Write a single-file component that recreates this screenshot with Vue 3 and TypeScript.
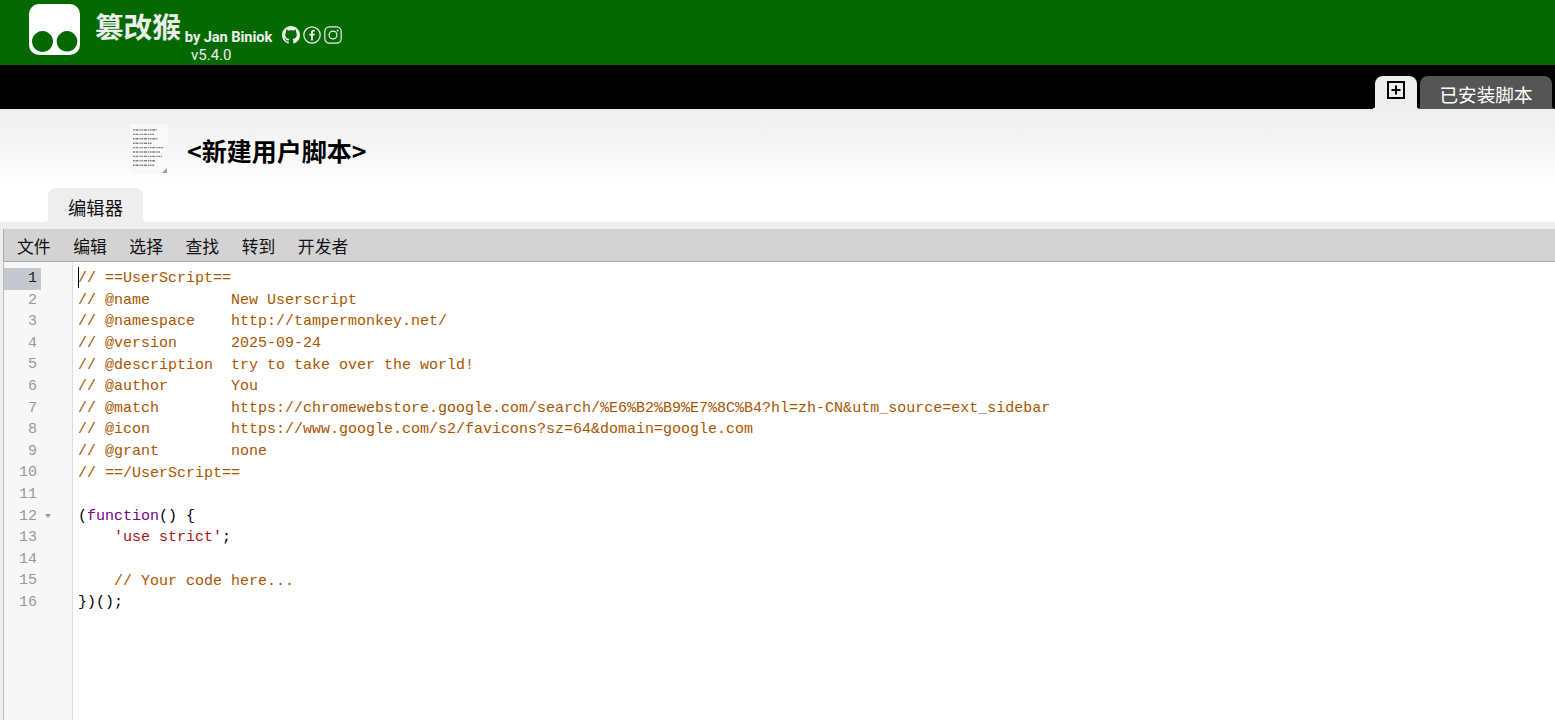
<script setup lang="ts">
type Token = { t: string; c?: string }
const comment = (t: string): Token[] => [{ t, c: 'cm' }]
const lines: Token[][] = [
  comment('// ==UserScript=='),
  comment('// @name         New Userscript'),
  comment('// @namespace    http://tampermonkey.net/'),
  comment('// @version      2025-09-24'),
  comment('// @description  try to take over the world!'),
  comment('// @author       You'),
  comment('// @match        https://chromewebstore.google.com/search/%E6%B2%B9%E7%8C%B4?hl=zh-CN&utm_source=ext_sidebar'),
  comment('// @icon         https://www.google.com/s2/favicons?sz=64&domain=google.com'),
  comment('// @grant        none'),
  comment('// ==/UserScript=='),
  [],
  [{ t: '(' }, { t: 'function', c: 'kw' }, { t: '() {' }],
  [{ t: '    ' }, { t: "'use strict'", c: 'str' }, { t: ';' }],
  [],
  [{ t: '    ' }, { t: '// Your code here...', c: 'cm' }],
  [{ t: '})();' }],
]
const menus = ['文件', '编辑', '选择', '查找', '转到', '开发者']
const thumbRows = [24, 21, 25, 19, 30, 27, 29, 22, 21]
</script>

<template>
  <div class="page">
    <header class="top">
      <svg class="logo" viewBox="0 0 51 51" aria-label="Tampermonkey">
        <path fill="#fff" fill-rule="evenodd" d="M10 0H41A10 10 0 0 1 51 10V41A10 10 0 0 1 41 51H10A10 10 0 0 1 0 41V10A10 10 0 0 1 10 0ZM13.5 27a10.5 10.5 0 1 0 .01 0ZM38 27a10.3 10.3 0 1 0 .01 0Z" />
      </svg>
      <div class="brand">
        <div class="brand-line">
          <span class="title">篡改猴</span>
          <span class="by">by Jan Biniok</span>
          <span class="social">
            <svg viewBox="0 0 16 16" class="ic"><path fill="#eee" d="M8 0C3.58 0 0 3.58 0 8c0 3.54 2.29 6.53 5.47 7.59.4.07.55-.17.55-.38 0-.19-.01-.82-.01-1.49-2.01.37-2.53-.49-2.69-.94-.09-.23-.48-.94-.82-1.13-.28-.15-.68-.52-.01-.53.63-.01 1.08.58 1.23.82.72 1.21 1.87.87 2.33.66.07-.52.28-.87.51-1.07-1.78-.2-3.64-.89-3.64-3.95 0-.87.31-1.59.82-2.15-.08-.2-.36-1.02.08-2.12 0 0 .67-.21 2.2.82.64-.18 1.32-.27 2-.27.68 0 1.36.09 2 .27 1.53-1.04 2.2-.82 2.2-.82.44 1.1.16 1.92.08 2.12.51.56.82 1.27.82 2.15 0 3.07-1.87 3.75-3.65 3.95.29.25.54.73.54 1.48 0 1.07-.01 1.93-.01 2.2 0 .21.15.46.55.38A8.013 8.013 0 0016 8c0-4.42-3.58-8-8-8z" /></svg>
            <svg viewBox="0 0 18 18" class="ic"><circle cx="9" cy="9" r="8.2" fill="none" stroke="#eee" stroke-width="1.2" /><path fill="#eee" d="M9.9 14.5V9.6h1.7l.25-1.9H9.9V6.5c0-.55.16-.93.95-.93h1V3.85A13 13 0 0 0 10.4 3.8C8.95 3.8 8 4.65 8 6.3v1.4H6.3v1.9H8v4.9Z" /></svg>
            <svg viewBox="0 0 18 18" class="ic"><rect x=".8" y=".8" width="16.4" height="16.4" rx="4.6" fill="none" stroke="#eee" stroke-width="1.2" /><circle cx="9" cy="9" r="3.9" fill="none" stroke="#eee" stroke-width="1.2" /><circle cx="13.6" cy="4.4" r="1" fill="#eee" /></svg>
          </span>
        </div>
        <div class="version">v5.4.0</div>
      </div>
    </header>

    <nav class="bar">
      <div class="top-tab add">
        <svg viewBox="0 0 18 18" class="plus"><rect x="1" y="1" width="16" height="16" fill="none" stroke="#000" stroke-width="2" /><path d="M9 4.5v9M4.5 9h9" stroke="#000" stroke-width="2" /></svg>
      </div>
      <div class="top-tab installed">已安装脚本</div>
    </nav>

    <section class="script-head">
      <div class="head-row">
        <div class="thumb">
          <svg viewBox="0 0 38 50" width="38" height="50">
            <rect width="38" height="50" fill="#f9f9f9" />
            <g stroke="#808080" stroke-width="1.4" stroke-dasharray="1.7 .8 3 1 1.2 .7">
              <line v-for="(w, i) in thumbRows" :key="i" x1="3" :x2="3 + w" :y1="6 + i * 4.4" :y2="6 + i * 4.4" />
            </g>
            <path d="M32 49l5-5v5z" fill="#999" />
          </svg>
        </div>
        <h1 class="script-name">&lt;新建用户脚本&gt;</h1>
      </div>
      <div class="sub-tabs"><div class="sub-tab">编辑器</div></div>
    </section>

    <section class="panel">
      <div class="menu">
        <span v-for="m in menus" :key="m">{{ m }}</span>
      </div>
      <div class="editor">
        <div class="gutter">
          <div v-for="(l, i) in lines" :key="i" class="gl">
            <span class="num" :class="{ active: i === 0 }">{{ i + 1 }}</span>
            <span v-if="i === 11" class="fold"></span>
          </div>
        </div>
        <div class="code">
          <i class="cursor"></i>
          <div v-for="(l, i) in lines" :key="i" class="cl"><span v-for="(s, j) in l" :key="j" :class="s.c">{{ s.t }}</span></div>
        </div>
      </div>
    </section>
  </div>
</template>

<style scoped>
.page {
  height: 720px;
  overflow: hidden;
  display: flex;
  flex-direction: column;
  background: #fff;
  font-family: "Roboto", "Noto Sans CJK SC", sans-serif;
}
.top {
  height: 65px;
  flex: none;
  background: #046a00;
  display: flex;
  padding-left: 29px;
  box-sizing: border-box;
  color: #eee;
}
.logo {
  width: 51px;
  height: 51px;
  margin-top: 4px;
}
.brand {
  margin-left: 15px;
}
.brand-line {
  display: flex;
  align-items: flex-end;
  height: 46px;
}
.title {
  font-size: 28.6px;
  font-weight: 700;
  line-height: 52px;
  height: 46px;
  font-family: "Noto Sans CJK SC", sans-serif;
}
.by {
  font-size: 14.7px;
  font-weight: 700;
  line-height: 16px;
  margin-left: 4px;
  margin-bottom: 1px;
  letter-spacing: -0.1px;
}
.social {
  display: flex;
  gap: 3px;
  margin-left: 10px;
  margin-bottom: 2px;
  align-items: center;
}
.ic {
  width: 18px;
  height: 18px;
  display: block;
}
.version {
  font-size: 15px;
  line-height: 16px;
  margin-left: 96px;
  margin-top: 1px;
}
.bar {
  height: 44px;
  flex: none;
  background: #000;
  display: flex;
  justify-content: flex-end;
  align-items: flex-end;
  gap: 3px;
  padding-right: 3px;
  box-sizing: border-box;
}
.top-tab {
  position: relative;
  height: 33px;
  box-sizing: border-box;
  border-radius: 8px 8px 0 0;
  display: flex;
  align-items: center;
  justify-content: center;
}
.top-tab::before,
.top-tab::after,
.sub-tab::before,
.sub-tab::after {
  content: "";
  position: absolute;
  bottom: 0;
  width: 2px;
  height: 3px;
}
.top-tab::before,
.sub-tab::before {
  left: -2px;
  background: radial-gradient(circle at 0 0, transparent 2px, var(--flare) 2.5px);
}
.top-tab::after,
.sub-tab::after {
  right: -2px;
  background: radial-gradient(circle at 100% 0, transparent 2px, var(--flare) 2.5px);
}
.add {
  --flare: #eee;
  width: 42px;
  background: #eee;
  padding-bottom: 5px;
}
.plus {
  width: 18px;
  height: 18px;
}
.installed {
  --flare: #555;
  width: 132px;
  background: #555;
  color: #fff;
  font-size: 18.6px;
  font-family: "Noto Sans CJK SC", sans-serif;
  padding-top: 2px;
}
.script-head {
  height: 113px;
  flex: none;
  box-sizing: border-box;
  background: linear-gradient(#eee, #fff 65%);
  display: flex;
  flex-direction: column;
}
.head-row {
  display: flex;
  align-items: center;
  height: 79px;
  padding-left: 130px;
}
.thumb {
  width: 38px;
  height: 50px;
  filter: blur(0.4px);
}
.script-name {
  margin: 2px 0 0 19px;
  font-size: 25px;
  font-weight: 700;
  color: #000;
  font-family: "Noto Sans CJK SC", sans-serif;
}
.sub-tabs {
  display: flex;
  padding-left: 48px;
  margin-top: auto;
}
.sub-tab {
  --flare: #eee;
  position: relative;
  width: 95px;
  height: 34px;
  background: #eee;
  border-radius: 8px 8px 0 0;
  font-size: 18.3px;
  line-height: 39px;
  text-align: center;
  color: #111;
  font-family: "Noto Sans CJK SC", sans-serif;
}
.panel {
  flex: 1;
  min-height: 0;
  background: #eee;
  padding: 7px 0 0 3px;
  display: flex;
  flex-direction: column;
}
.menu {
  height: 33px;
  flex: none;
  box-sizing: border-box;
  background: #d3d3d3;
  border-left: 1px solid #aaa;
  border-bottom: 1px solid #aaa;
  display: flex;
  align-items: center;
  gap: 22.6px;
  padding: 2px 0 0 13px;
  font-size: 16.8px;
  color: #111;
  font-family: "Noto Sans CJK SC", sans-serif;
}
.editor {
  flex: 1;
  min-height: 0;
  display: flex;
  background: #fff;
  border-left: 1px solid #bbb;
  font-family: "Liberation Mono", monospace;
  font-size: 15px;
  line-height: 21.6px;
}
.gutter {
  width: 69px;
  flex: none;
  box-sizing: border-box;
  background: #f7f7f7;
  border-right: 1px solid #ddd;
  padding-top: 6px;
}
.gl {
  height: 21.6px;
  display: flex;
  align-items: center;
  color: #999;
}
.num {
  width: 37px;
  box-sizing: border-box;
  padding-right: 4px;
  text-align: right;
}
.num.active {
  background: #c5c8cd;
  color: #222;
}
.fold {
  width: 0;
  height: 0;
  margin-left: 4px;
  border-left: 3px solid transparent;
  border-right: 3px solid transparent;
  border-top: 4px solid #999;
}
.code {
  position: relative;
  flex: 1;
  padding: 6.3px 0 0 5px;
  color: #000;
}
.cl {
  height: 21.6px;
  white-space: pre;
}
.cursor {
  position: absolute;
  left: 5px;
  top: 5px;
  width: 1px;
  height: 21px;
  background: #000;
}
.cm {
  color: #a50;
}
.kw {
  color: #708;
}
.str {
  color: #a11;
}
</style>
